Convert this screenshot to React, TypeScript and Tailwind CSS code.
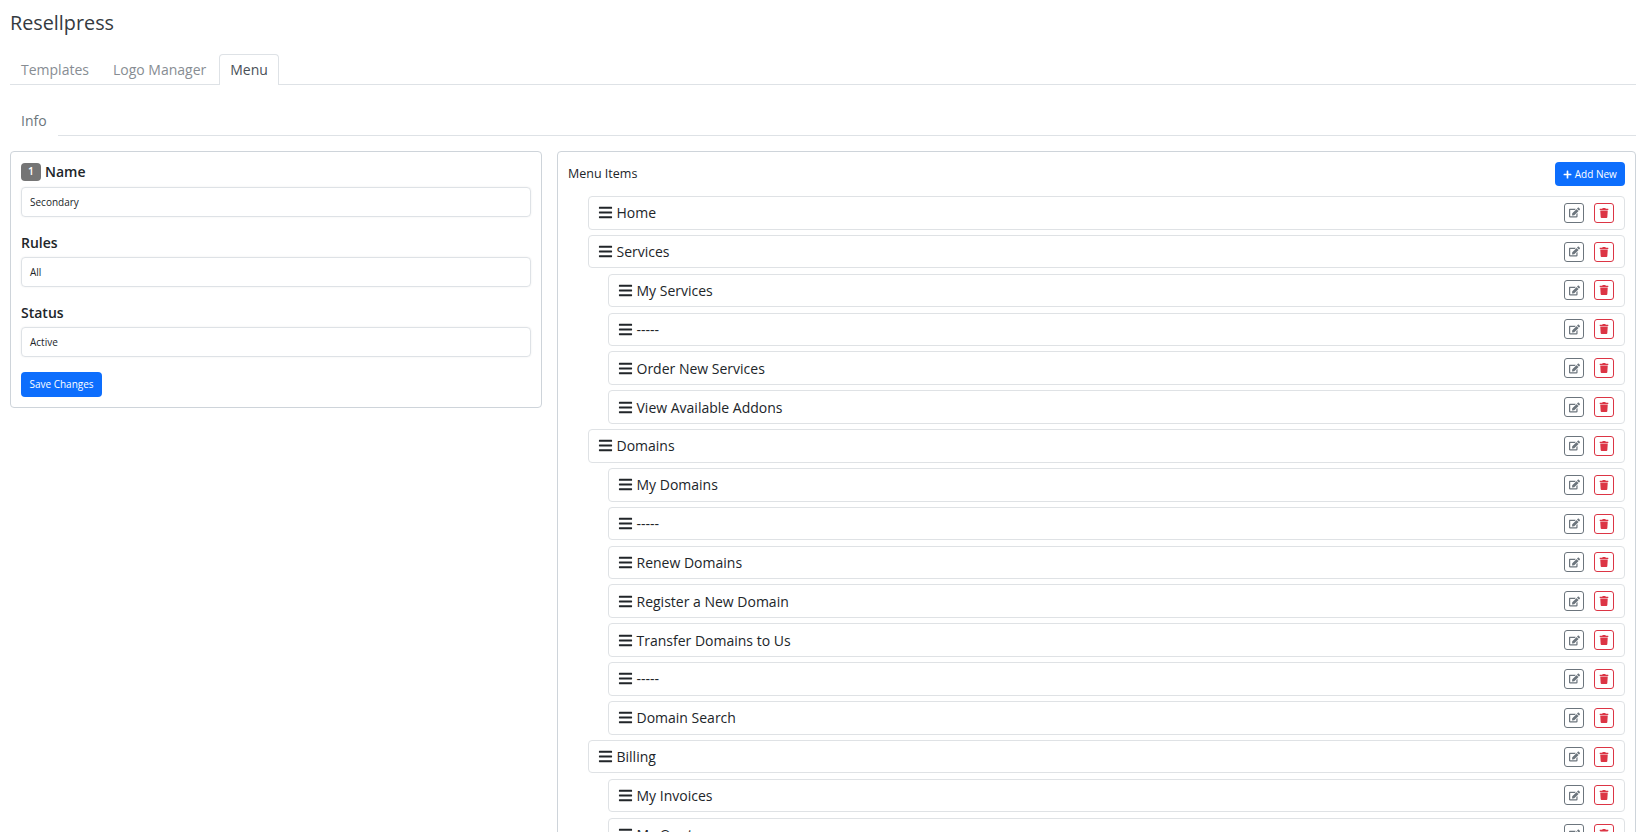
import React from "react";
import { FaBars, FaEdit, FaPlus, FaTrash } from "react-icons/fa";

type Item = { label: string; child?: boolean };

const items: Item[] = [
  { label: "Home" },
  { label: "Services" },
  { label: "My Services", child: true },
  { label: "-----", child: true },
  { label: "Order New Services", child: true },
  { label: "View Available Addons", child: true },
  { label: "Domains" },
  { label: "My Domains", child: true },
  { label: "-----", child: true },
  { label: "Renew Domains", child: true },
  { label: "Register a New Domain", child: true },
  { label: "Transfer Domains to Us", child: true },
  { label: "-----", child: true },
  { label: "Domain Search", child: true },
  { label: "Billing" },
  { label: "My Invoices", child: true },
  { label: "My Quotes", child: true },
];

const Field = ({ label, value, badge }: { label: string; value: string; badge?: boolean }) => (
  <div className="mb-[15px] last-of-type:mb-[13px]">
    <div
      className={`mb-[4px] flex h-[21px] items-center text-[14px] font-semibold text-[#212529] ${
        badge ? "pb-[2px]" : "pb-[1px]"
      }`}
    >
      {badge && (
        <span className="mr-[4px] flex h-[18px] w-[20px] items-center justify-center rounded-[4px] bg-[#757575] text-[10.5px] font-semibold text-white">
          1
        </span>
      )}
      {label}
    </div>
    <div className="flex h-[30px] items-center rounded-[4px] border border-[#dee2e6] px-[8px] text-[10px] text-[#212529] shadow-[0_0_2px_rgba(0,0,0,0.08)]">
      {value}
    </div>
  </div>
);

const Row = ({ label, child }: Item) => (
  <div
    className={`mb-[5.26px] flex h-[33.6px] items-center justify-between rounded-[4px] border border-[#dfe2e5] pl-[9px] pr-[10px] ${
      child ? "ml-[40px]" : "ml-[20px]"
    }`}
  >
    <div className="flex items-center text-[14px] text-[#212529]">
      <FaBars size={15} className="mr-[3.5px]" />
      {label}
    </div>
    <div className="flex gap-[10px]">
      <button className="flex h-[20px] w-[20px] items-center justify-center rounded-[3px] border border-[#6c757d] text-[#6c757d]">
        <FaEdit size={11} />
      </button>
      <button className="flex h-[20px] w-[20px] items-center justify-center rounded-[3px] border border-[#dc3545] text-[#dc3545]">
        <FaTrash size={10} />
      </button>
    </div>
  </div>
);

const App = () => {
  return (
    <div className="h-[832px] overflow-hidden bg-white pl-[10px] pr-[11px] font-['Open_Sans',sans-serif] text-[#212529]">
      <h1 className="h-[54px] pt-[10px] text-[19.8px] leading-[26px] text-[#343a40]">Resellpress</h1>

      <div className="flex h-[31px] border-b border-[#dee2e6] text-[14px]">
        <div className="flex items-center pl-[11px] pr-[12px] text-[#878d93]">Templates</div>
        <div className="flex items-center px-[12px] text-[#878d93]">Logo Manager</div>
        <div className="ml-[1px] flex h-[31px] items-center rounded-t-[4px] border border-b-0 border-[#dee2e6] bg-white px-[10px] pb-[2px] text-[#495057]">
          Menu
        </div>
      </div>

      <div className="mt-[20px] flex h-[31px]">
        <div className="flex items-center pl-[11px] pr-[11px] text-[14px] text-[#6c757d]">Info</div>
        <div className="flex-1 border-b border-[#dee2e6]" />
      </div>

      <div className="mt-[15px] flex items-start gap-[15px]">
        <div className="w-[532px] rounded-[4px] border border-[#ced4da] p-[10px]">
          <Field label="Name" value="Secondary" badge />
          <Field label="Rules" value="All" />
          <Field label="Status" value="Active" />
          <button className="h-[25px] w-[81px] rounded-[4px] bg-[#0d6efd] text-[10px] text-white">
            Save Changes
          </button>
        </div>

        <div className="flex-1 rounded-[4px] border border-[#ced4da] pl-[10px] pr-[10px] pt-[10px]">
          <div className="mb-[10px] flex h-[24px] items-center justify-between">
            <span className="text-[12.5px]">Menu Items</span>
            <button className="flex h-[24px] w-[70px] items-center justify-center rounded-[4px] bg-[#0d6efd] text-[10px] text-white">
              <FaPlus size={9} className="mr-[2.5px]" />
              Add New
            </button>
          </div>
          {items.map((item, i) => (
            <Row key={i} {...item} />
          ))}
        </div>
      </div>
    </div>
  );
};

export default App;
